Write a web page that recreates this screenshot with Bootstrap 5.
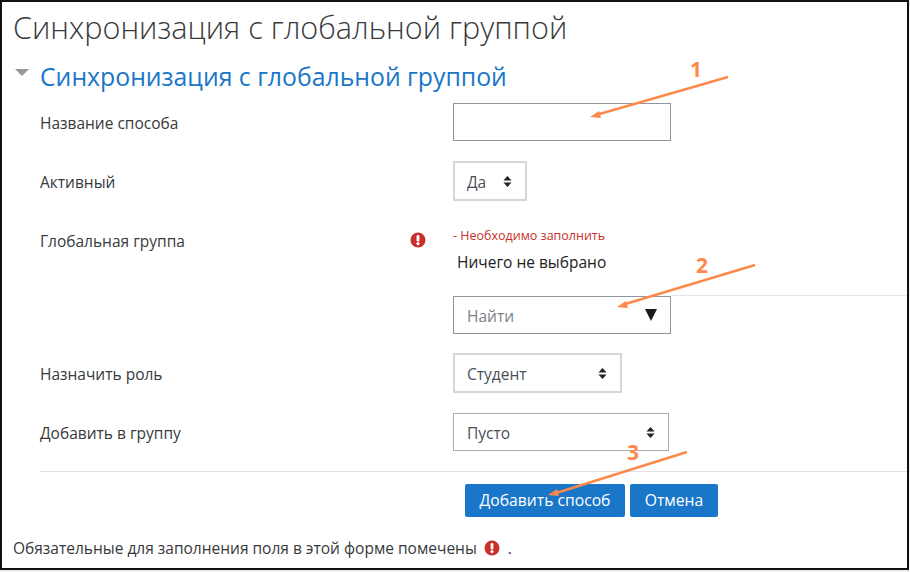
<!DOCTYPE html>
<html lang="ru">
<head>
<meta charset="utf-8">
<title>Синхронизация с глобальной группой</title>
<link rel="stylesheet" href="https://cdn.jsdelivr.net/npm/bootstrap@5.3.0/dist/css/bootstrap.min.css">
<style>
html,body{margin:0;height:572px;overflow:hidden;background:#f0f0f0;}
body{font-family:"Open Sans","Noto Sans","Liberation Sans",sans-serif;color:#373a3c;font-size:15.5px;}
.shot-frame{position:relative;width:909px;height:570px;background:#fff;border:2px solid #111;overflow:hidden;}
.page-title{font-size:30.6px;font-weight:300;line-height:36px;margin:0;padding:7px 0 0 11px;color:#373a3c;}
.sec-head{display:flex;align-items:center;padding:15px 0 0 13px;height:47px;}
.sec-tri{width:0;height:0;border-left:7px solid transparent;border-right:7px solid transparent;border-top:7px solid #999;margin-right:11px;margin-top:-7px;}
.sec-title{font-size:24.8px;font-weight:400;line-height:32px;margin:0;color:#1a76c9;}
.frow{display:flex;padding-left:38px;}
.flabel{width:367px;flex:none;padding-top:4px;}
.ficon{width:46px;flex:none;}
.r1{height:38px;margin-top:11px;align-items:center;}
.r2{height:40px;margin-top:20px;align-items:center;}
.r3{margin-top:21px;height:112px;}
.r3 .flabel{padding-top:8px;}
.r3 .ficon{padding:10px 0 0 3px;}
.r4{height:40px;margin-top:19px;align-items:center;}
.r5{height:38px;margin-top:20px;align-items:center;}
.ctl{border:1px solid #8f959e;border-radius:0;height:38px;padding:3px 13px 0;font-size:15.5px;color:#495057;background-color:#fff;box-shadow:none;}
.ctl-light{border:2px solid #d3d6da;height:40px;padding-left:12px;}
.sel{padding-right:13px;background-image:url("data:image/svg+xml,%3Csvg xmlns='http://www.w3.org/2000/svg' viewBox='0 0 10 12'%3E%3Cpath fill='%23222' d='M5 0l4.5 4.8h-9zM5 12L.5 7.2h9z'/%3E%3C/svg%3E");background-size:9px 11px;background-position:right 13px center;}
.w-yes{width:74px;}
.w-stu{width:169px;}
.w-emp{width:216px;height:38px;border-width:1px;border-color:#a8adb3;padding-left:13px;}
.w-txt{width:218px;}
.err-text{color:#c9302c;font-size:12.5px;line-height:16px;padding-top:6px;height:24px;}
.none-text{font-size:15.5px;line-height:20px;color:#222;padding:6px 0 0 4px;height:50px;}
.find-row{position:relative;}
.find-line{position:absolute;left:218px;right:-300px;top:-1px;border-top:1px solid #dfe8f0;}
.find-box{display:flex;align-items:center;justify-content:space-between;color:#7d8288;padding-right:13px;border-width:1px;border-color:#8f959e;}
.find-tri{width:0;height:0;margin-top:-3px;border-left:6.5px solid transparent;border-right:6.5px solid transparent;border-top:12px solid #1b1b1b;}
.rule{margin:20px 0 0 38px;border:0;border-top:1px solid #dfe0e1;opacity:1;}
.btn-line{display:flex;gap:5px;padding-left:463px;margin-top:12px;}
.act{background:#1a76c9;border:0;border-radius:2px;color:#fff;height:33px;font-size:15.7px;padding:0;}
.act-a{width:160px;}
.act-b{width:88px;}
.foot-note{display:flex;align-items:center;padding-left:11px;margin-top:21px;line-height:20px;}
.foot-icon{margin-left:3px;}
.notes{position:absolute;left:-2px;top:-2px;pointer-events:none;}
.num{font-family:"Open Sans","Noto Sans",sans-serif;font-weight:700;font-size:21px;fill:#fd8a4a;}
</style>
</head>
<body>
<div class="shot-frame">
  <h2 class="page-title">Синхронизация с глобальной группой</h2>
  <div class="sec-head"><span class="sec-tri"></span><h3 class="sec-title">Синхронизация с глобальной группой</h3></div>
  <form>
    <div class="frow r1"><div class="flabel">Название способа</div><div class="ficon"></div><input type="text" class="form-control ctl w-txt" aria-label="Название способа"></div>
    <div class="frow r2"><div class="flabel">Активный</div><div class="ficon"></div><select class="form-select ctl ctl-light sel w-yes" aria-label="Активный"><option>Да</option></select></div>
    <div class="frow r3">
      <div class="flabel">Глобальная группа</div>
      <div class="ficon"><svg class="d-block" width="16" height="16" viewBox="0 0 16 16" aria-hidden="true"><circle cx="8" cy="8" r="7.5" fill="#c9302c"/><rect x="6.6" y="3" width="2.8" height="6.4" rx="1.2" fill="#fff"/><circle cx="8" cy="11.6" r="1.6" fill="#fff"/></svg></div>
      <div>
        <div class="err-text">- Необходимо заполнить</div>
        <div class="none-text">Ничего не выбрано</div>
        <div class="find-row"><div class="find-line"></div><div class="ctl find-box w-txt"><span>Найти</span><span class="find-tri"></span></div></div>
      </div>
    </div>
    <div class="frow r4"><div class="flabel">Назначить роль</div><div class="ficon"></div><select class="form-select ctl ctl-light sel w-stu" aria-label="Назначить роль"><option>Студент</option></select></div>
    <div class="frow r5"><div class="flabel">Добавить в группу</div><div class="ficon"></div><select class="form-select ctl sel w-emp" aria-label="Добавить в группу"><option>Пусто</option></select></div>
    <hr class="rule">
    <div class="btn-line"><button type="button" class="btn act act-a">Добавить способ</button><button type="button" class="btn act act-b">Отмена</button></div>
  </form>
  <div class="foot-note">Обязательные для заполнения поля в этой форме помечены&nbsp;<svg class="foot-icon" width="16" height="16" viewBox="0 0 16 16" aria-hidden="true"><circle cx="8" cy="8" r="7.5" fill="#c9302c"/><rect x="6.6" y="3" width="2.8" height="6.4" rx="1.2" fill="#fff"/><circle cx="8" cy="11.6" r="1.6" fill="#fff"/></svg><span class="ms-2">.</span></div>
  <svg class="notes" width="910" height="572" aria-hidden="true">
    <g stroke="#fd8a4a" stroke-width="2.4" fill="none">
      <path d="M728 77L596 115"/><path d="M755 265L622 305"/><path d="M687 452L553 494"/>
    </g>
    <g fill="#fd8a4a">
      <path d="M590 117l9-6 2 7z"/><path d="M617 307l9-6 2 7z"/><path d="M548 495l9-6 2 7z"/>
    </g>
    <text class="num" x="690" y="77">1</text>
    <text class="num" x="696" y="273">2</text>
    <text class="num" x="627" y="460">3</text>
  </svg>
</div>
<script src="https://cdn.jsdelivr.net/npm/bootstrap@5.3.0/dist/js/bootstrap.bundle.min.js"></script>
</body>
</html>
